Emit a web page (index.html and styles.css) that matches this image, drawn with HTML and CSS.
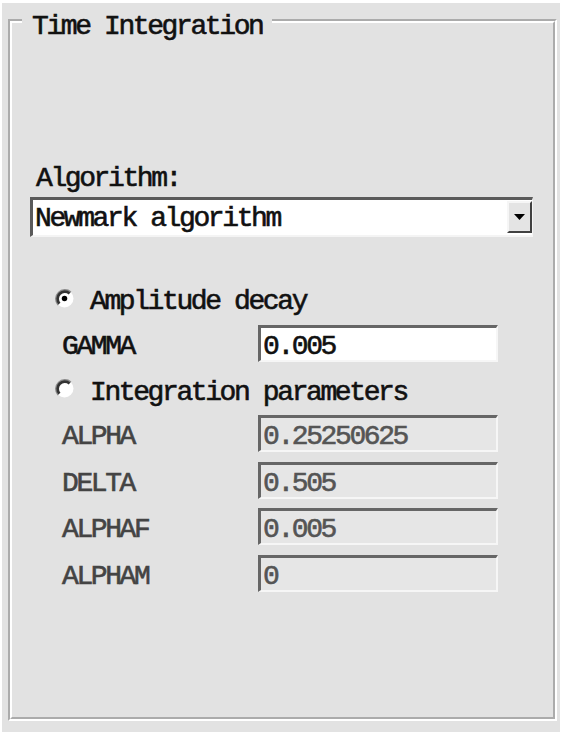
FILE: index.html
```html
<!DOCTYPE html>
<html lang="en">
<head>
    <meta charset="UTF-8">
    <meta name="viewport" content="width=device-width, initial-scale=1.0">
    <title>Time Integration</title>
    <link rel="stylesheet" href="styles.css">
</head>
<body>
    <div class="panel">
        <div class="group">
            <div class="group-title">Time Integration</div>

            <div class="field-label">Algorithm:</div>
            <div class="combo">
                <span class="combo-text">Newmark algorithm</span>
                <span class="combo-button">
                    <svg width="11" height="6" viewBox="0 0 11 6"><path d="M0 0h11L5.5 6z" fill="#000"/></svg>
                </span>
            </div>

            <div class="option">
                <svg class="radio" width="19" height="19" viewBox="0 0 18 18">
                    <circle cx="9" cy="9" r="8.5" fill="#fff"/>
                    <path d="M15 3A8.5 8.5 0 0 0 3 15" fill="none" stroke="#8a8a8a" stroke-width="1.6"/>
                    <path d="M13.8 4.2A6.8 6.8 0 0 0 4.2 13.8" fill="none" stroke="#333" stroke-width="2.6"/>
                    <circle cx="9" cy="9" r="2.6" fill="#000"/>
                </svg>
                <span>Amplitude decay</span>
            </div>
            <div class="param">
                <span class="param-name">GAMMA</span>
                <span class="entry">0.005</span>
            </div>

            <div class="option">
                <svg class="radio" width="19" height="19" viewBox="0 0 18 18">
                    <circle cx="9" cy="9" r="8.5" fill="#fff"/>
                    <path d="M15 3A8.5 8.5 0 0 0 3 15" fill="none" stroke="#8a8a8a" stroke-width="1.6"/>
                    <path d="M13.8 4.2A6.8 6.8 0 0 0 4.2 13.8" fill="none" stroke="#333" stroke-width="2.6"/>
                </svg>
                <span>Integration parameters</span>
            </div>
            <div class="param disabled">
                <span class="param-name">ALPHA</span>
                <span class="entry">0.25250625</span>
            </div>
            <div class="param disabled">
                <span class="param-name">DELTA</span>
                <span class="entry">0.505</span>
            </div>
            <div class="param disabled">
                <span class="param-name">ALPHAF</span>
                <span class="entry">0.005</span>
            </div>
            <div class="param disabled">
                <span class="param-name">ALPHAM</span>
                <span class="entry">0</span>
            </div>
        </div>
    </div>
</body>
</html>
```

FILE: styles.css
```css
body {
    margin: 0;
    background: #fff;
    font-family: "Liberation Mono", "Courier New", monospace;
    font-size: 28px;
    letter-spacing: -2.4px;
    color: #111;
    -webkit-text-stroke: 0.6px currentColor;
}

.panel {
    display: flex;
    width: 558px;
    height: 729px;
    margin: 3px 0 0 2px;
    padding: 16px 3px 11px 6px;
    box-sizing: border-box;
    background: #e2e2e2;
}

.group {
    flex: 1;
    border: 4px groove #fff;
    padding: 0 20px 0 18px;
}

.group-title {
    width: fit-content;
    margin: -11px 0 0 -8px;
    padding: 0 10px;
    line-height: 30px;
    background: #e2e2e2;
    white-space: nowrap;
}

.field-label {
    margin-top: 122px;
    padding-left: 6px;
    line-height: 30px;
}

.combo {
    display: flex;
    height: 40px;
    margin-top: 3px;
    box-sizing: border-box;
    border-style: solid;
    border-width: 3px 1px 2px 3px;
    border-color: #5a5a5a #f4f4f4 #f4f4f4 #5a5a5a;
    background: #fff;
}

.combo-text {
    flex: 1;
    padding: 2px 0 0 2px;
    line-height: 33px;
    white-space: nowrap;
}

.combo-button {
    display: flex;
    align-items: center;
    justify-content: center;
    width: 25px;
    height: 32px;
    margin-top: 1px;
    box-sizing: border-box;
    border: 2px solid;
    border-color: #f6f6f6 #404040 #404040 #f6f6f6;
    background: #e4e4e4;
}

.option {
    display: flex;
    align-items: center;
    height: 30px;
    margin-top: 16px;
    padding-left: 25px;
    line-height: 30px;
    white-space: nowrap;
}

.combo + .option {
    margin-top: 50px;
}

.radio {
    flex: none;
    margin: 0 16px 8px 0;
}

.param {
    display: grid;
    grid-template-columns: 196px 240px;
    height: 37px;
    margin-top: 7.5px;
    padding-left: 32px;
}

.param + .param {
    margin-top: 9.5px;
}

.param-name {
    padding-top: 6px;
    line-height: 31px;
}

.entry {
    height: 37px;
    box-sizing: border-box;
    padding: 5px 0 0 2px;
    border-style: solid;
    border-width: 3px 2px 2px 3px;
    border-color: #666 #f6f6f6 #f6f6f6 #666;
    background: #fff;
    line-height: 27px;
    white-space: nowrap;
}

.param.disabled .param-name {
    color: #444;
}

.param.disabled .entry {
    color: #555;
    background: #e6e6e6;
}
```
